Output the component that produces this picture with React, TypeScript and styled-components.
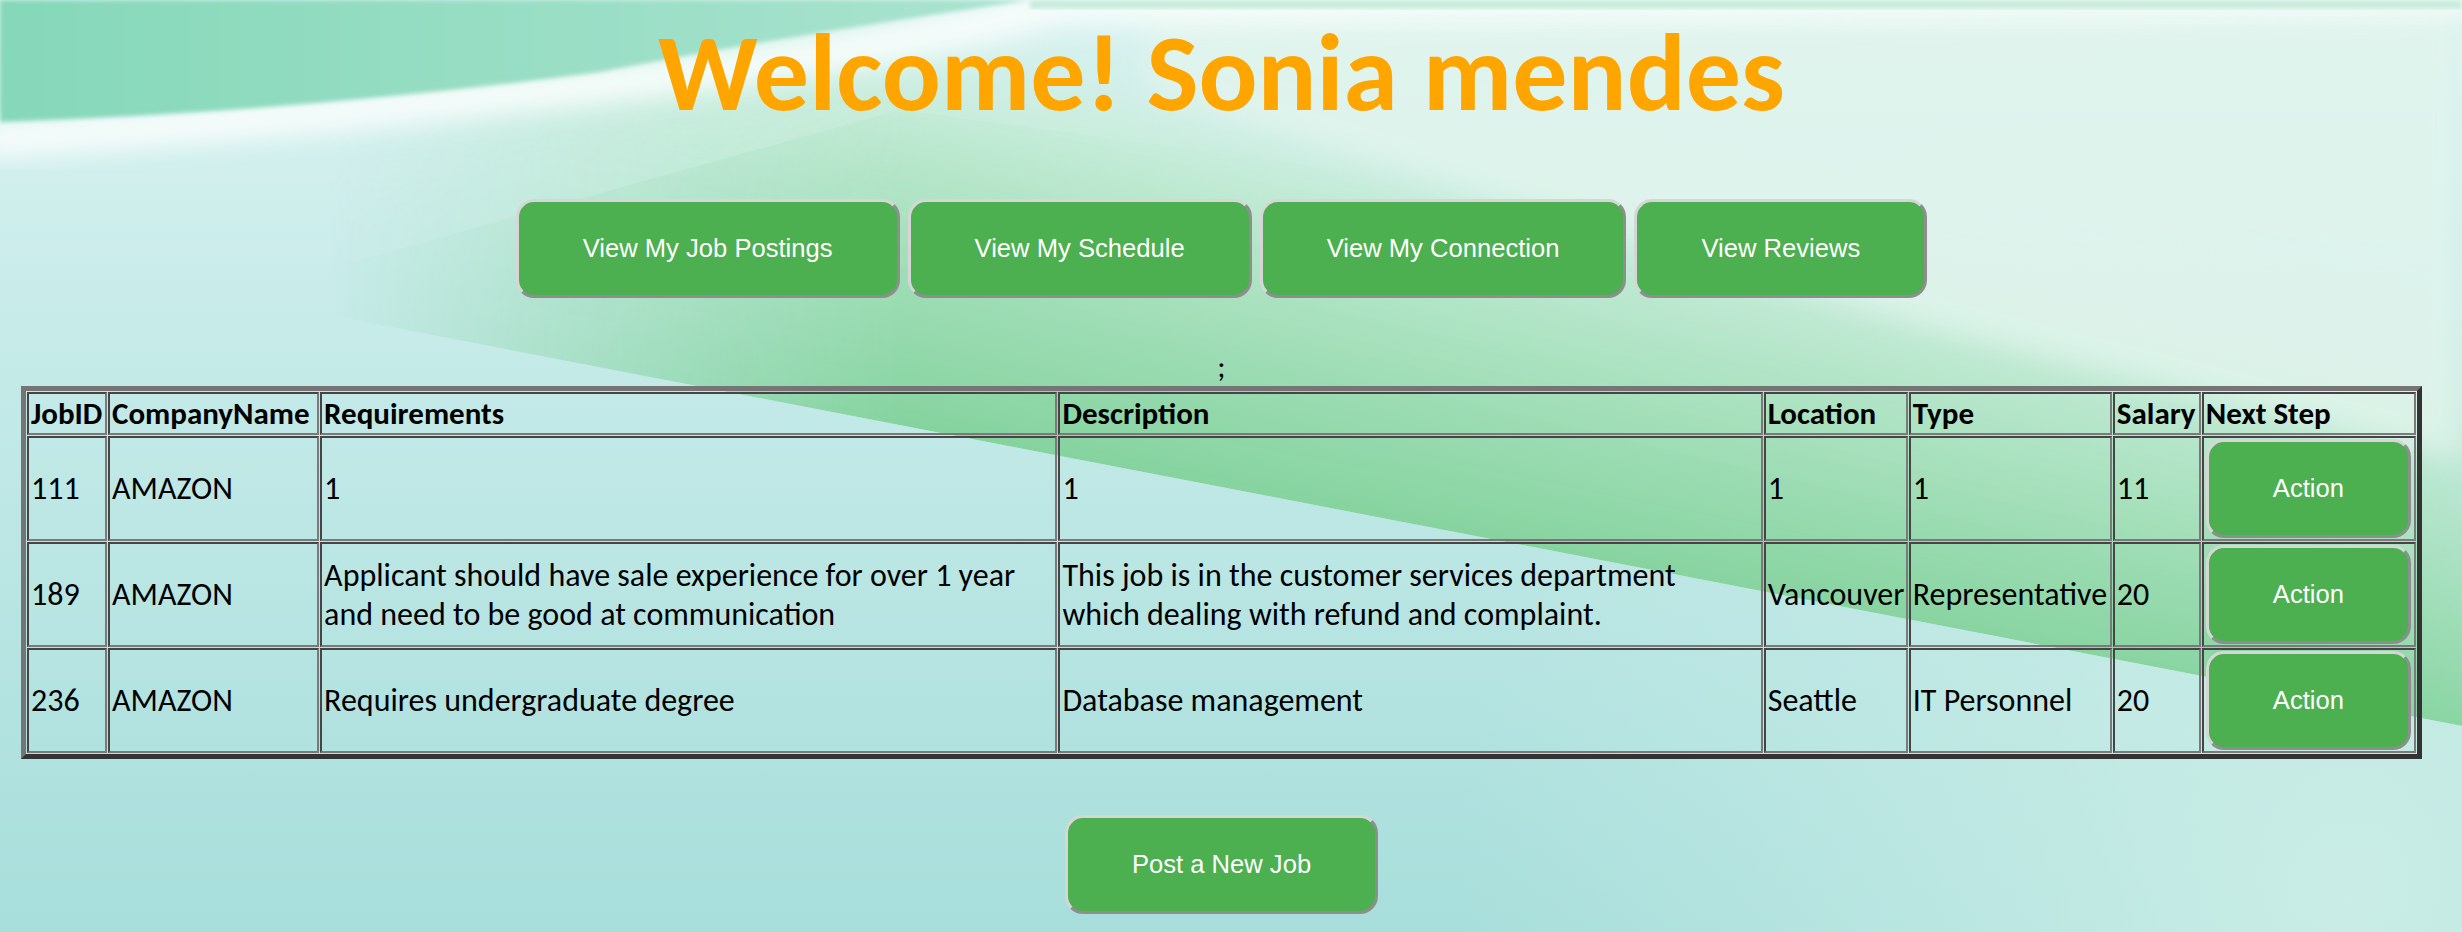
import React from "react";
import styled, { createGlobalStyle } from "styled-components";

const GlobalStyle = createGlobalStyle`
  html, body {
    margin: 0;
    padding: 0;
  }
  body {
    font-family: Carlito, Calibri, Lato, "Liberation Sans", sans-serif;
    color: #000;
  }
`;

const Page = styled.div`
  position: relative;
  min-height: 932px;
  box-sizing: border-box;
  padding: 9px 40px 0 21px;
  overflow: hidden;
`;

const Backdrop = styled.svg`
  position: absolute;
  inset: 0;
  width: 100%;
  height: 100%;
  z-index: 0;
  pointer-events: none;
`;

const Content = styled.main`
  position: relative;
  z-index: 1;
  display: flex;
  flex-direction: column;
`;

const Title = styled.h1`
  margin: 0;
  text-align: center;
  font-family: Carlito, Calibri, Lato, sans-serif;
  font-weight: 700;
  font-size: 110px;
  line-height: 128px;
  color: #ffa500;
`;

const NavRow = styled.nav`
  display: flex;
  justify-content: center;
  gap: 8px;
  margin-top: 62px;
`;

const GreenButton = styled.button<{ $block?: boolean }>`
  display: ${(p) => (p.$block ? "block" : "inline-block")};
  font-family: "Liberation Sans", Arial, sans-serif;
  font-size: 25.6px;
  line-height: normal;
  color: #fff;
  background: #4caf50;
  padding: 32px 64px;
  border: 3px solid;
  border-color: #d6d6d6 #8e8e8e #8e8e8e #d6d6d6;
  border-radius: 18px;
  white-space: nowrap;
  cursor: pointer;
`;

const Stray = styled.div`
  text-align: center;
  font-size: 31px;
  line-height: 39px;
  margin-top: 49px;
`;

const JobTable = styled.table`
  width: 100%;
  table-layout: fixed;
  border-collapse: separate;
  border-spacing: 1px;
  border: 5px solid;
  border-color: #757575 #333 #333 #757575;
  font-size: 32px;
  line-height: 39px;
`;

const HeadCell = styled.th<{ $w: number }>`
  width: ${(p) => p.$w}px;
  box-sizing: border-box;
  text-align: left;
  font-size: 31px;
  font-weight: 700;
  padding: 0 2px;
  border: 2px solid;
  border-color: #454545 #7a7a7a #7a7a7a #454545;
  white-space: nowrap;
  overflow: visible;
`;

const Cell = styled.td<{ $padRight?: number }>`
  box-sizing: border-box;
  text-align: left;
  vertical-align: middle;
  padding: 1px ${(p) => p.$padRight ?? 2}px 1px 2px;
  border: 2px solid;
  border-color: #454545 #7a7a7a #7a7a7a #454545;
  overflow: visible;
`;

const Footer = styled.div`
  display: flex;
  justify-content: center;
  margin-top: 56px;
`;

type Job = {
  id: string;
  company: string;
  req: string;
  desc: string;
  loc: string;
  type: string;
  salary: string;
};

const columns: { label: string; w: number }[] = [
  { label: "JobID", w: 80 },
  { label: "CompanyName", w: 211 },
  { label: "Requirements", w: 737 },
  { label: "Description", w: 704 },
  { label: "Location", w: 144 },
  { label: "Type", w: 203 },
  { label: "Salary", w: 88 },
  { label: "Next Step", w: 214 },
];

const jobs: Job[] = [
  { id: "111", company: "AMAZON", req: "1", desc: "1", loc: "1", type: "1", salary: "11" },
  {
    id: "189",
    company: "AMAZON",
    req: "Applicant should have sale experience for over 1 year and need to be good at communication",
    desc: "This job is in the customer services department which dealing with refund and complaint.",
    loc: "Vancouver",
    type: "Representative",
    salary: "20",
  },
  {
    id: "236",
    company: "AMAZON",
    req: "Requires undergraduate degree",
    desc: "Database management",
    loc: "Seattle",
    type: "IT Personnel",
    salary: "20",
  },
];

const Background = () => (
  <Backdrop viewBox="0 0 2462 932" preserveAspectRatio="none" aria-hidden="true">
    <defs>
      <linearGradient id="base" x1="0" y1="0" x2="0" y2="1">
        <stop offset="0" stopColor="#dbf3f1" />
        <stop offset="0.3" stopColor="#c9ecea" />
        <stop offset="1" stopColor="#a7dedb" />
      </linearGradient>
      <radialGradient id="rightGlow" cx="2350" cy="900" r="900" gradientUnits="userSpaceOnUse">
        <stop offset="0" stopColor="#cdeee7" stopOpacity="0.9" />
        <stop offset="1" stopColor="#cdeee7" stopOpacity="0" />
      </radialGradient>
      <linearGradient id="bandSoft" gradientUnits="userSpaceOnUse" x1="1420" y1="60" x2="1300" y2="560">
        <stop offset="0" stopColor="#d6f1e1" stopOpacity="0.6" />
        <stop offset="0.55" stopColor="#b9e8cc" />
        <stop offset="1" stopColor="#a1ddb8" />
      </linearGradient>
      <linearGradient id="bandStrong" gradientUnits="userSpaceOnUse" x1="1370" y1="170" x2="1300" y2="505">
        <stop offset="0" stopColor="#a3ddba" stopOpacity="0" />
        <stop offset="0.6" stopColor="#95d9ad" stopOpacity="0.7" />
        <stop offset="1" stopColor="#85d39e" />
      </linearGradient>
      <linearGradient id="fadeLeft" gradientUnits="userSpaceOnUse" x1="330" y1="0" x2="900" y2="0">
        <stop offset="0" stopColor="#fff" stopOpacity="0" />
        <stop offset="1" stopColor="#fff" stopOpacity="1" />
      </linearGradient>
      <linearGradient id="mint" gradientUnits="userSpaceOnUse" x1="0" y1="0" x2="1000" y2="0">
        <stop offset="0" stopColor="#86d8ba" />
        <stop offset="1" stopColor="#a9e3cf" />
      </linearGradient>
      <mask id="leftMask" maskUnits="userSpaceOnUse" x="0" y="0" width="2462" height="932">
        <rect width="2462" height="932" fill="url(#fadeLeft)" />
      </mask>
      <clipPath id="aboveEdge">
        <polygon points="0,0 2462,0 2462,726 250,300 0,252" />
      </clipPath>
      <filter id="blurL" x="-30%" y="-30%" width="160%" height="160%">
        <feGaussianBlur stdDeviation="45" />
      </filter>
      <filter id="blurM" x="-20%" y="-20%" width="140%" height="140%">
        <feGaussianBlur stdDeviation="14" />
      </filter>
      <filter id="blurS" x="-10%" y="-10%" width="120%" height="120%">
        <feGaussianBlur stdDeviation="2" />
      </filter>
    </defs>
    <rect width="2462" height="932" fill="url(#base)" />
    <rect width="2462" height="932" fill="url(#rightGlow)" />
    <g clipPath="url(#aboveEdge)" mask="url(#leftMask)">
      <polygon points="560,0 2462,370 2462,760 180,300" fill="url(#bandSoft)" filter="url(#blurL)" />
      <polygon points="230,296 2462,726 2462,320 900,110" fill="url(#bandStrong)" />
    </g>
    <polygon points="1150,0 2462,0 2462,460 1933,328 1150,95" fill="#e3f5ed" opacity="0.75" filter="url(#blurM)" />
    <path d="M-20,140 Q 320,118 620,82 T 1060,4 L 2480,-6" stroke="#fbfefd" strokeWidth="34" fill="none" filter="url(#blurM)" />
    <path d="M0,0 L1030,0 Q 760,40 600,72 Q 300,112 0,122 Z" fill="url(#mint)" filter="url(#blurS)" />
    <rect x="1030" y="0" width="1432" height="9" fill="#c8ecdd" filter="url(#blurS)" />
  </Backdrop>
);

export default function App() {
  return (
    <>
      <GlobalStyle />
      <Page>
        <Background />
        <Content>
          <Title>Welcome! Sonia mendes</Title>
          <NavRow>
            <GreenButton>View My Job Postings</GreenButton>
            <GreenButton>View My Schedule</GreenButton>
            <GreenButton>View My Connection</GreenButton>
            <GreenButton>View Reviews</GreenButton>
          </NavRow>
          <Stray>;</Stray>
          <JobTable>
            <thead>
              <tr>
                {columns.map((c) => (
                  <HeadCell key={c.label} $w={c.w}>
                    {c.label}
                  </HeadCell>
                ))}
              </tr>
            </thead>
            <tbody>
              {jobs.map((j) => (
                <tr key={j.id}>
                  <Cell>{j.id}</Cell>
                  <Cell>{j.company}</Cell>
                  <Cell $padRight={14}>{j.req}</Cell>
                  <Cell $padRight={40}>{j.desc}</Cell>
                  <Cell>{j.loc}</Cell>
                  <Cell>{j.type}</Cell>
                  <Cell>{j.salary}</Cell>
                  <Cell>
                    <GreenButton $block>Action</GreenButton>
                  </Cell>
                </tr>
              ))}
            </tbody>
          </JobTable>
          <Footer>
            <GreenButton>Post a New Job</GreenButton>
          </Footer>
        </Content>
      </Page>
    </>
  );
}
